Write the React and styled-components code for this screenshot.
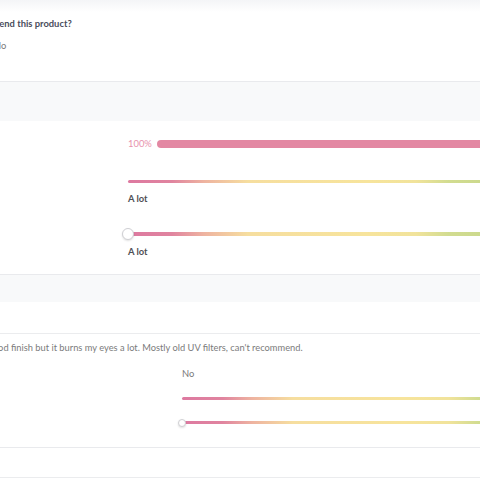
import React from "react";
import styled, { createGlobalStyle } from "styled-components";

const Global = createGlobalStyle`
  html, body { margin: 0; padding: 0; background: #ffffff; }
  body {
    font-family: Lato, "Open Sans", "Liberation Sans", sans-serif;
    -webkit-font-smoothing: antialiased;
  }
`;

const Viewport = styled.div`
  width: 480px;
  height: 480px;
  overflow: hidden;
  background: #ffffff;
`;

const Page = styled.div`
  margin-left: -82px;
  width: 760px;
`;

const TopFade = styled.div`
  height: 12px;
  background: linear-gradient(#f4f5f7, #ffffff);
`;

const QuestionBlock = styled.section`
  padding: 5px 0 28px;
  border-bottom: 1px solid #e9eaed;
`;

const Question = styled.div`
  font-size: 9.4px;
  line-height: 14px;
  font-weight: 700;
  color: #4a4d5c;
`;

const Answer = styled.div`
  margin-top: 8px;
  margin-left: 76px;
  font-size: 9.4px;
  line-height: 14px;
  color: #7a7a7a;
`;

const Band = styled.div`
  height: ${(p) => p.$h}px;
  background: #f8f9fa;
`;

const Blank = styled.div`
  height: ${(p) => p.$h}px;
  background: #ffffff;
  border-bottom: 1px solid #ebecee;
`;

const RatingsBlock = styled.section`
  display: grid;
  grid-template-columns: ${(p) => p.$col}px 1fr;
  padding: ${(p) => p.$pt}px 0 ${(p) => p.$pb}px;
  border-bottom: 1px solid #e9eaed;
`;

const Column = styled.div`
  grid-column: 2;
  display: flex;
  flex-direction: column;
`;

const PercentRow = styled.div`
  display: flex;
  align-items: center;
  gap: 5px;
  height: 12px;
`;

const Percent = styled.span`
  font-size: 9.4px;
  line-height: 12px;
  color: #e892ad;
`;

const Bar = styled.div`
  flex: 1;
  height: 8px;
  border-radius: 4px;
  background: #e388a3;
`;

const Scale = styled.div`
  position: relative;
  width: ${(p) => p.$w}px;
  height: ${(p) => p.$h}px;
  margin-top: ${(p) => p.$mt}px;
  border-radius: 2px;
  background: linear-gradient(
    to right,
    #dd79a0 0%,
    #e0849f 11%,
    #eeb3a0 19%,
    #f6de9f 30%,
    #f7e49c 60%,
    #f1e39b 72%,
    #d2dc90 80%,
    #c3d589 100%
  );
`;

const Knob = styled.span`
  position: absolute;
  left: ${(p) => -p.$size / 2}px;
  top: 50%;
  width: ${(p) => p.$size}px;
  height: ${(p) => p.$size}px;
  margin-top: ${(p) => -p.$size / 2}px;
  box-sizing: border-box;
  border-radius: 50%;
  background: #ffffff;
  border: 1px solid #cfcfd3;
  box-shadow: 0 1px 2px rgba(0, 0, 0, 0.12);
`;

const Label = styled.div`
  margin-top: ${(p) => p.$mt}px;
  font-size: 9.4px;
  line-height: 14px;
  font-weight: ${(p) => (p.$bold ? 700 : 400)};
  color: ${(p) => (p.$bold ? "#4f4f55" : "#7a7a7a")};
`;

const ReviewText = styled.p`
  grid-column: 1 / span 2;
  margin: 0;
  font-size: 9.3px;
  line-height: 14px;
  color: #7b7b7b;
  white-space: nowrap;
`;

export default function App() {
  return (
    <>
      <Global />
      <Viewport>
        <Page>
          <TopFade />
          <QuestionBlock>
            <Question>Would you recommend this product?</Question>
            <Answer>No</Answer>
          </QuestionBlock>
          <Band $h={39} />
          <RatingsBlock $col={210} $pt={17} $pb={15}>
            <Column>
              <PercentRow>
                <Percent>100%</Percent>
                <Bar />
              </PercentRow>
              <Scale $w={400} $h={3} $mt={30} />
              <Label $bold $mt={9}>A lot</Label>
              <Scale $w={400} $h={4} $mt={26}>
                <Knob $size={12} />
              </Scale>
              <Label $bold $mt={9}>A lot</Label>
            </Column>
          </RatingsBlock>
          <Band $h={27} />
          <Blank $h={31} />
          <RatingsBlock $col={264} $pt={7} $pb={23}>
            <ReviewText>
              Nice texture and good finish but it burns my eyes a lot. Mostly old UV filters, can't recommend.
            </ReviewText>
            <Column>
              <Label $mt={12}>No</Label>
              <Scale $w={370} $h={3} $mt={16} />
              <Scale $w={370} $h={3} $mt={21}>
                <Knob $size={8} />
              </Scale>
            </Column>
          </RatingsBlock>
          <Blank $h={29} />
        </Page>
      </Viewport>
    </>
  );
}
